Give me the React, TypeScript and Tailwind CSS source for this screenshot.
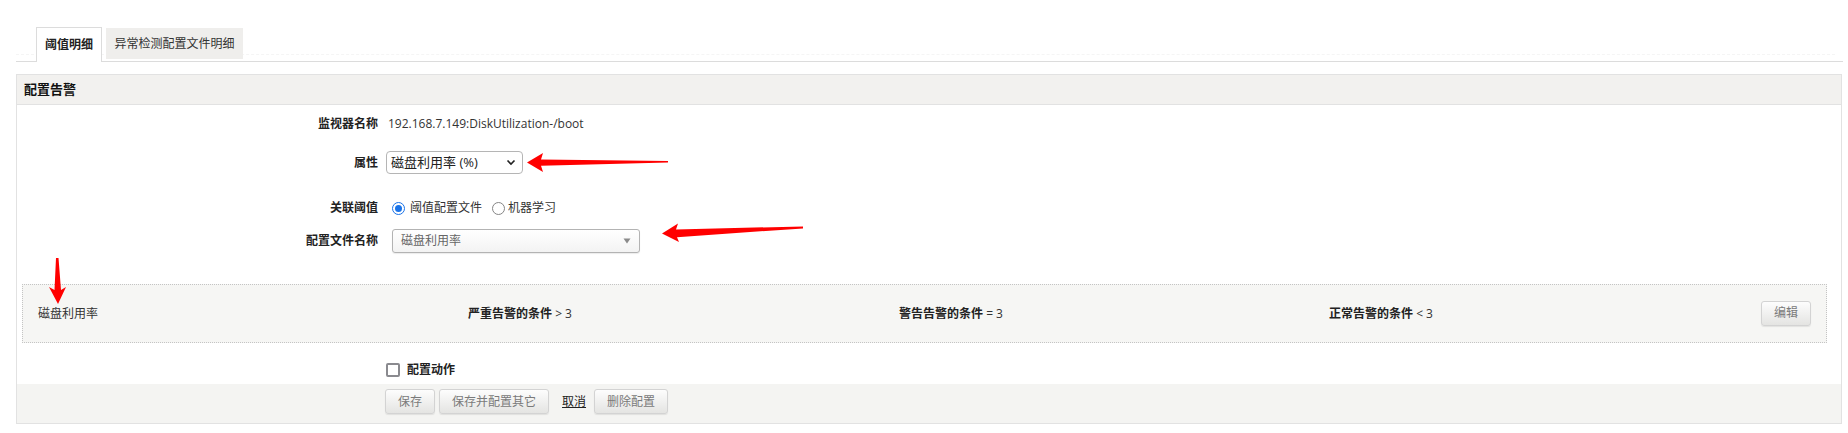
import React from "react";

function Btn({ children, className = "" }: { children: React.ReactNode; className?: string }) {
  return (
    <div
      className={
        "h-[25px] flex items-center justify-center px-[12px] whitespace-nowrap rounded-[3px] border border-[#d3d3d3] bg-linear-to-b from-[#fdfdfd] to-[#e4e4e2] text-[#7a7a7a] text-[12px] shadow-[0_1px_1px_rgba(0,0,0,0.08)] " +
        className
      }
    >
      {children}
    </div>
  );
}

export default function App() {
  return (
    <div className="relative w-[1848px] h-[433px] bg-white text-[12px] text-[#333] font-['Open_Sans','Noto_Sans_CJK_SC',sans-serif] overflow-hidden">
      {/* Tabs */}
      <div className="pt-[27px] pl-[16px]">
        <div className="relative w-[1827px] h-[35px] border-b border-[#dcdcdc] flex items-start pl-[20px] gap-[4px]">
          <div className="absolute left-0 right-[8px] top-[27px] border-t border-dashed border-[#f5f5f5]" />
          <div className="relative h-[35px] border border-b-0 border-[#dcdcdc] bg-white px-[8px] flex items-center font-bold text-[#222] leading-none">
            阈值明细
          </div>
          <div className="relative mt-[1px] h-[31px] w-[137px] bg-[#efeeec] flex items-center justify-center text-[#333] leading-none">
            异常检测配置文件明细
          </div>
        </div>
      </div>

      {/* Panel */}
      <div className="ml-[16px] mt-[12px] w-[1826px] border border-[#e2e2e2]">
        <div className="h-[30px] bg-[#f2f1ef] border-b border-[#e2e2e2] flex items-center pl-[7px] font-bold text-[13px] text-[#111]">
          配置告警
        </div>

        {/* Row 1 */}
        <div className="h-[38px] flex items-center">
          <div className="w-[361px] text-right font-bold text-[#222]">监视器名称</div>
          <div className="ml-[10px] text-[#333]">192.168.7.149:DiskUtilization-/boot</div>
        </div>

        {/* Row 2 */}
        <div className="mt-[8px] h-[23px] flex items-center">
          <div className="w-[361px] text-right font-bold text-[#222]">属性</div>
          <div className="ml-[8px] w-[137px] h-[23px] rounded-[4px] border border-[#b5b5b5] bg-white flex items-center justify-between pl-[4px] pr-[6px] text-[#222] text-[13px]">
            <span>磁盘利用率 (%)</span>
            <svg width="10" height="7" viewBox="0 0 10 7">
              <path d="M1.5 1.5 L5 5 L8.5 1.5" fill="none" stroke="#222" strokeWidth="1.6" />
            </svg>
          </div>
        </div>

        {/* Row 3 */}
        <div className="mt-[26px] h-[16px] flex items-center">
          <div className="w-[361px] text-right font-bold text-[#222]">关联阈值</div>
          <div className="ml-[14px] flex items-center">
            <div className="w-[13px] h-[13px] rounded-full border-[1.5px] border-[#1a73e8] flex items-center justify-center">
              <div className="w-[7px] h-[7px] rounded-full bg-[#1a73e8]" />
            </div>
            <span className="ml-[5px]">阈值配置文件</span>
            <div className="ml-[10px] w-[13px] h-[13px] rounded-full border-[1.5px] border-[#858585]" />
            <span className="ml-[3px]">机器学习</span>
          </div>
        </div>

        {/* Row 4 */}
        <div className="mt-[13px] h-[24px] flex items-center">
          <div className="w-[361px] text-right font-bold text-[#222]">配置文件名称</div>
          <div className="ml-[14px] w-[248px] h-[24px] rounded-[3px] border border-[#b3b3b3] bg-linear-to-b from-white to-[#f3f3f3] flex items-center justify-between pl-[8px] pr-[8px] text-[#666] shadow-[0_1px_1px_rgba(0,0,0,0.08)]">
            <span>磁盘利用率</span>
            <svg width="8" height="6" viewBox="0 0 8 6">
              <path d="M0.5 0.5 L7.5 0.5 L4 5.5 Z" fill="#8a8a8a" />
            </svg>
          </div>
        </div>

        {/* Inner box */}
        <div className="mt-[31px] ml-[5px] w-[1805px] h-[59px] border border-dotted border-[#c4c4c4] bg-[#f6f6f4] grid grid-cols-[430px_431px_430px_432px_1fr] items-center pl-[15px]">
          <div className="text-[#333]">磁盘利用率</div>
          <div>
            <span className="font-bold text-[#222]">严重告警的条件</span>
            <span className="text-[#333]"> &gt; 3</span>
          </div>
          <div>
            <span className="font-bold text-[#222]">警告告警的条件</span>
            <span className="text-[#333]"> = 3</span>
          </div>
          <div>
            <span className="font-bold text-[#222]">正常告警的条件</span>
            <span className="text-[#333]"> &lt; 3</span>
          </div>
          <div className="flex">
            <Btn className="mb-[1px]">编辑</Btn>
          </div>
        </div>

        {/* Checkbox row */}
        <div className="h-[41px] flex items-end pb-[5px] pl-[369px]">
          <div className="flex items-center">
            <div className="w-[14px] h-[14px] rounded-[2px] border-2 border-[#8a8a8f] bg-white" />
            <span className="ml-[7px] font-bold text-[#222]">配置动作</span>
          </div>
        </div>

        {/* Footer */}
        <div className="h-[39px] bg-[#f4f4f2] pt-[5px] pl-[368px] flex items-start">
          <Btn>保存</Btn>
          <Btn className="ml-[4px]">保存并配置其它</Btn>
          <span className="ml-[13px] mr-[8px] h-[25px] flex items-center underline text-[#222]">取消</span>
          <Btn>删除配置</Btn>
        </div>
      </div>

      {/* Annotation arrows */}
      <svg className="absolute left-0 top-0 pointer-events-none" width="1848" height="433" viewBox="0 0 1848 433">
        <polygon
          points="527,162.5 543,153 541,159.5 668,161 668,162.6 541,165.8 543,172"
          fill="#ff0000"
        />
        <polygon
          points="662,233.5 678,223.5 676,229.5 803,226.4 803,228.4 677,237.2 679,242"
          fill="#ff0000"
        />
        <polygon
          points="56,258 58.5,258 61,290 66,287 58,304 49,287 54.5,290"
          fill="#ff0000"
        />
      </svg>
    </div>
  );
}
